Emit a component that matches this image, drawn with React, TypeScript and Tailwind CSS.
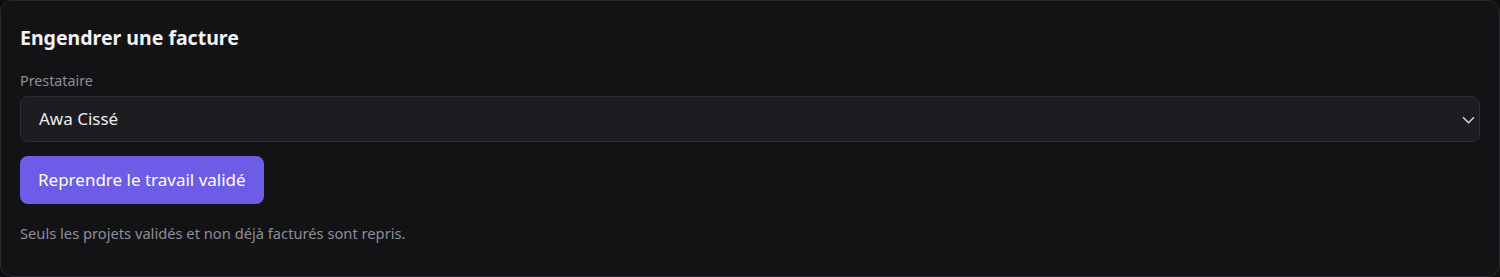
import React from "react";

export default function App() {
  return (
    <div className="w-[1500px] h-[277px] bg-[#0f0f11]" style={{ fontFamily: '"Noto Sans", "Open Sans", sans-serif' }}>
      <div className="h-full rounded-[12px] border border-[#2a2a2f] bg-[#131316] px-[19px] pt-[24px]">
        <h2 className="text-[19.5px] font-bold leading-[26px] text-[#f3f3f5]">Engendrer une facture</h2>
        <div className="mt-[20px] text-[14.3px] leading-[20px] text-[#8e8e96]">Prestataire</div>
        <div className="mt-[5px] flex h-[46px] items-center justify-between rounded-[8px] border border-[#2c2c32] bg-[#1c1c21] pl-[18px] pr-[4px]">
          <span className="text-[17px] text-[#ececef]">Awa Cissé</span>
          <svg width="13" height="8" viewBox="0 0 13 8" fill="none" stroke="#d8d8dc" strokeWidth="1.5" className="mt-[1px]">
            <path d="M1 1.2l5.5 5.5 5.5-5.5" />
          </svg>
        </div>
        <button className="mt-[14px] flex h-[48px] items-center rounded-[8px] bg-[#6c5ce7] px-[18px] text-[17px] text-white">
          Reprendre le travail validé
        </button>
        <p className="mt-[19px] text-[14.7px] leading-[20px] text-[#8e8e96]">Seuls les projets validés et non déjà facturés sont repris.</p>
      </div>
    </div>
  );
}
